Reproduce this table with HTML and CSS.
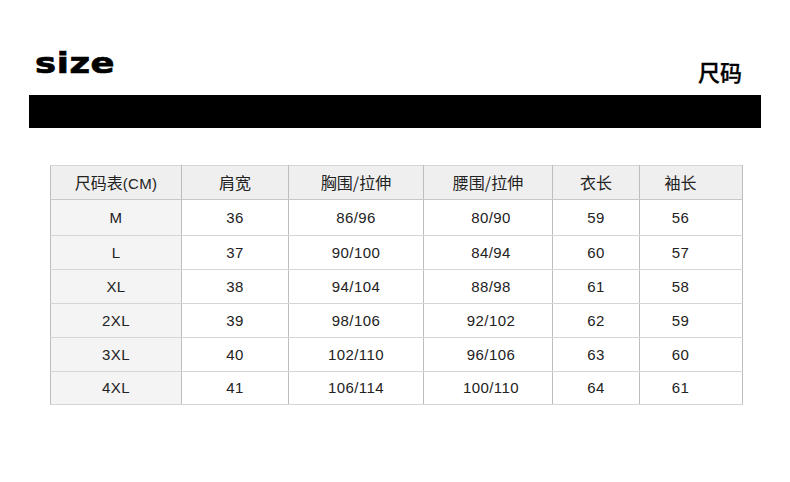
FILE: index.html
```html
<!DOCTYPE html>
<html lang="zh">
<head>
<meta charset="utf-8">
<title>size 尺码</title>
<link rel="stylesheet" href="styles.css">
</head>
<body>
<div class="page">
  <header class="head">
    <span class="size-word">size</span>
    <span class="cn-title">尺码</span>
  </header>
  <div class="bar"></div>
  <table class="chart">
    <colgroup>
      <col class="c1"><col class="c2"><col class="c3"><col class="c4"><col class="c5"><col class="c6">
    </colgroup>
    <thead>
      <tr><th>尺码表<span class="lat">(CM)</span></th><th>肩宽</th><th>胸围/拉伸</th><th>腰围/拉伸</th><th>衣长</th><th class="last">袖长</th></tr>
    </thead>
    <tbody>
      <tr class="r-m"><td>M</td><td>36</td><td>86/96</td><td class="w">80/90</td><td>59</td><td class="last">56</td></tr>
      <tr><td>L</td><td>37</td><td>90/100</td><td class="w">84/94</td><td>60</td><td class="last">57</td></tr>
      <tr><td>XL</td><td>38</td><td>94/104</td><td class="w">88/98</td><td>61</td><td class="last">58</td></tr>
      <tr><td>2XL</td><td>39</td><td>98/106</td><td class="w">92/102</td><td>62</td><td class="last">59</td></tr>
      <tr><td>3XL</td><td>40</td><td>102/110</td><td class="w">96/106</td><td>63</td><td class="last">60</td></tr>
      <tr class="r-end"><td>4XL</td><td>41</td><td>106/114</td><td class="w">100/110</td><td>64</td><td class="last">61</td></tr>
    </tbody>
  </table>
</div>
</body>
</html>
```

FILE: styles.css
```css
* { box-sizing: border-box; }
html, body { margin: 0; padding: 0; background: #ffffff; }
body {
  width: 790px;
  height: 482px;
  overflow: hidden;
  font-family: "Liberation Sans", "Noto Sans CJK SC", sans-serif;
  color: #222;
}
.page { padding-top: 47px; }
.head {
  display: flex;
  justify-content: space-between;
  align-items: flex-end;
  padding: 0 48px 0 35px;
  height: 40px;
}
.size-word {
  display: inline-block;
  font-family: "DejaVu Sans", sans-serif;
  font-weight: 900;
  font-size: 29px;
  line-height: 29px;
  letter-spacing: 0.5px;
  color: #000;
  transform: scaleX(1.22) translateY(-9px);
  transform-origin: left bottom;
  -webkit-text-stroke: 0.7px #000;
}
.cn-title {
  font-family: "Noto Sans CJK SC", sans-serif;
  font-weight: 500;
  font-size: 22px;
  line-height: 22px;
  color: #000;
  transform: translateY(-5px);
  -webkit-text-stroke: 0.3px #000;
}
.bar {
  margin: 8px 29px 0 29px;
  height: 33px;
  background: #000;
}
.chart {
  margin: 37px 0 0 50px;
  border-collapse: collapse;
  table-layout: fixed;
  width: 692px;
  border: 1px solid #a8a8a8;
  font-size: 15px;
  letter-spacing: 0.4px;
}
.c1 { width: 131px; }
.c2 { width: 107px; }
.c3 { width: 135px; }
.c4 { width: 129px; }
.c5 { width: 87px; }
.c6 { width: 103px; }
.chart th, .chart td {
  text-align: center;
  padding: 0 0 1px 0;
  border-left: 1px solid #bdbdbd;
  border-right: 1px solid #bdbdbd;
  border-top: 1px solid #d6d6d6;
  border-bottom: 1px solid #d6d6d6;
  height: 34px;
  color: #222;
}
.chart th {
  font-weight: 400;
  font-family: "Noto Sans CJK SC", sans-serif;
  background: #efefef;
  font-size: 16px;
  letter-spacing: 0;
  border-bottom: 1px solid #c8c8c8;
}
.chart th .lat {
  font-family: "Liberation Sans", sans-serif;
  font-size: 15px;
  letter-spacing: 0.3px;
}
.chart td:first-child { background: #f4f4f4; }
.chart .last { padding-right: 21px; }
.chart .w { padding-left: 6px; }
.r-m td { height: 36px; }
.r-end td { height: 33px; }
```
